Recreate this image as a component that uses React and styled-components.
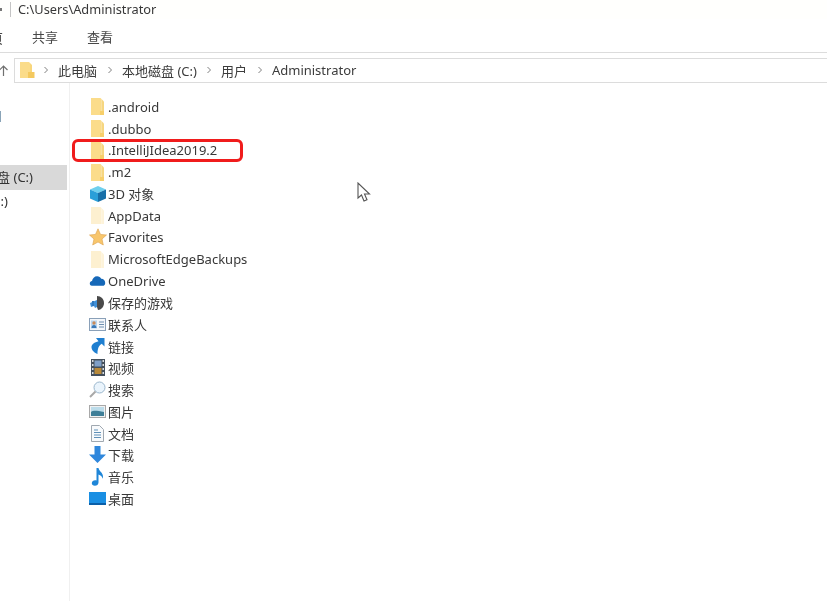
import React from 'react';
import styled, { createGlobalStyle } from 'styled-components';

const GlobalStyle = createGlobalStyle`
  html, body {
    margin: 0;
    padding: 0;
    background: #fff;
  }
`;

const FONT = `'Noto Sans', 'Noto Sans CJK SC', sans-serif`;

const Window = styled.div`
  width: 827px;
  height: 601px;
  overflow: hidden;
  position: relative;
  background: #fff;
  color: #333;
  font-family: ${FONT};
  font-size: 13px;
  filter: blur(0.5px);
`;

const TitleBar = styled.div`
  height: 19px;
  box-sizing: border-box;
  padding-bottom: 1px;
  display: flex;
  align-items: center;
  background: #fffffd;
`;

const TitleCaret = styled.span`
  width: 2px;
  height: 3px;
  background: #777;
  flex: none;
`;

const TitleSep = styled.span`
  width: 1px;
  height: 15px;
  background: #c4c4c4;
  margin-left: 8px;
  margin-right: 7px;
`;

const TitleText = styled.span`
  font-size: 12.8px;
  color: #383838;
`;

const Ribbon = styled.div`
  height: 34px;
  box-sizing: border-box;
  display: flex;
  align-items: center;
  padding: 2px 0 0 32px;
  gap: 29px;
  border-bottom: 1px solid #dcdcdc;
`;

const Tab = styled.span`
  font-size: 13px;
  color: #484848;
`;

const ClippedTab = styled(Tab)`
  position: absolute;
  left: -23px;
  top: 28px;
`;

const AddressRow = styled.div`
  height: 30px;
  box-sizing: border-box;
  display: flex;
  padding-top: 5px;
  align-items: stretch;
`;

const UpArrow = styled.div`
  width: 15px;
  margin-left: -1px;
  display: flex;
  align-items: center;
`;

const AddressBar = styled.div`
  flex: 1;
  display: flex;
  align-items: center;
  box-sizing: border-box;
  border: 1px solid #dcdcdc;
  border-right: none;
  padding: 0 0 1px 5px;
  font-size: 13px;
  color: #3c3c3c;
`;

const Crumb = styled.span`
  margin-left: 9px;
  white-space: nowrap;
`;

const Chevron = styled.svg`
  width: 6px;
  height: 8px;
  margin-left: ${p => p.$gap}px;
  flex: none;
`;

const Body = styled.div`
  flex: 1;
  display: flex;
`;

const Sidebar = styled.div`
  width: 70px;
  height: 518px;
  box-sizing: border-box;
  border-right: 1px solid #f0f0f0;
  padding-top: 82px;
  padding-right: 2px;
  display: flex;
  flex-direction: column;
  position: relative;
`;

const PinMark = styled.span`
  position: absolute;
  left: 0;
  top: 28px;
  width: 1px;
  height: 11px;
  background: #8aa4b8;
`;

const DriveRow = styled.div`
  height: 25px;
  box-sizing: border-box;
  display: flex;
  align-items: center;
  justify-content: flex-end;
  overflow: hidden;
  white-space: nowrap;
  padding-bottom: 3px;
  padding-right: ${p => p.$pad}px;
  font-size: 13px;
  background: ${p => (p.$selected ? '#d9d9d9' : 'transparent')};
`;

const FileList = styled.div`
  flex: 1;
  padding: 13px 0 0 18px;
  display: flex;
  flex-direction: column;
  position: relative;
`;

const Row = styled.div`
  height: 21.75px;
  display: flex;
  align-items: center;
  flex: none;
`;

const IconBox = styled.div`
  width: 19px;
  height: 20px;
  display: flex;
  align-items: center;
  justify-content: center;
  flex: none;
`;

const Name = styled.span`
  margin-left: 1px;
  white-space: nowrap;
  font-size: 13px;
  color: #383838;
`;

const RedBox = styled.div`
  position: absolute;
  left: 2px;
  top: 56px;
  width: 171px;
  height: 23px;
  box-sizing: border-box;
  border: 3px solid #f01c1c;
  border-radius: 6px;
`;

const Cursor = styled.svg`
  position: absolute;
  left: 356px;
  top: 182px;
  width: 16px;
  height: 22px;
`;

const Folder = ({ pale }) => (
  <svg width="15" height="19" viewBox="0 0 15 19">
    <path d="M1 1h9.500l1 1v16H1z" fill={pale ? '#fdf0d0' : '#fbdc8a'} />
    <path d="M11.500 2l2.500 2.500V18h-2.500z" fill={pale ? '#fdf3da' : '#f6d680'} />
    {!pale && <path d="M10 14h4v4h-4z" fill="#f7cf6a" />}
  </svg>
);

const Cube = () => (
  <svg width="18" height="18" viewBox="0 0 18 18">
    <path d="M9 1l8 3.500-8 3.500-8-3.500z" fill="#6fd0ee" />
    <path d="M1 4.500l8 3.500v9l-8-3.500z" fill="#2a9fd8" />
    <path d="M9 8l8-3.500v9l-8 3.500z" fill="#176fa8" />
  </svg>
);

const Star = () => (
  <svg width="18" height="18" viewBox="0 0 18 18">
    <path d="M9 .8l2.500 5.600 6 .6-4.500 4 1.300 6L9 14l-5.300 3 1.300-6-4.500-4 6-.6z" fill="#f8c66c" stroke="#dba04a" strokeWidth=".6" />
  </svg>
);

const Cloud = () => (
  <svg width="17" height="12" viewBox="0 0 18 14">
    <path d="M2.500 12.500C.6 12.500 0 11 0 9.800c0-1.600 1.200-2.700 2.600-2.800C3 4 5.500 1.500 8.500 1.500c2.300 0 4 1.200 4.800 3 2.500-.2 4.700 2 4.700 4.700 0 2-1.200 3.300-3 3.300z" fill="#1668b8" />
  </svg>
);

const Games = () => (
  <svg width="18" height="18" viewBox="0 0 18 18">
    <path d="M1 9l7-3v7l-2 1-1-2-3 1z" fill="#3f8fd6" />
    <path d="M8 2c4 0 7 3 7 7s-3 7-6 7l-1-3V2z" fill="#4a4a4a" />
    <path d="M3 7h2v5H3z" fill="#2f78bf" />
  </svg>
);

const Contact = () => (
  <svg width="17" height="13" viewBox="0 0 17 13">
    <rect x=".5" y=".5" width="16" height="12" fill="#f4f7fb" stroke="#8aa0b8" />
    <rect x="2" y="2.500" width="6" height="8" fill="#b8d6f0" />
    <circle cx="5" cy="5" r="1.700" fill="#c88a5a" />
    <path d="M2.500 10c0-2 1.200-3 2.500-3s2.500 1 2.500 3z" fill="#3a78b8" />
    <path d="M10 4h5M10 6.500h5M10 9h5" stroke="#6e8fb0" />
  </svg>
);

const LinkArrow = () => (
  <svg width="15" height="18" viewBox="0 0 15 18">
    <path d="M6 1h8.500v8.500l-2.800-2.800C9 8.500 7.500 11 7.500 17 3 15 1.500 12.500 1.500 10c0-2.500 3-5 7-5.800z" fill="#1f7fd0" />
  </svg>
);

const Film = () => (
  <svg width="14" height="17" viewBox="0 0 14 17">
    <rect width="14" height="17" fill="#45505c" />
    <path d="M1 1h1.500v2H1zM1 5h1.500v2H1zM1 9h1.500v2H1zM1 13h1.500v2H1zM11.500 1H13v2h-1.500zM11.500 5H13v2h-1.500zM11.500 9H13v2h-1.500zM11.500 13H13v2h-1.500z" fill="#d8dce0" />
    <rect x="3.500" y="1.500" width="7" height="6" fill="#7f9fc8" />
    <rect x="3.500" y="9" width="7" height="6" fill="#b8893a" />
  </svg>
);

const Search = () => (
  <svg width="17" height="17" viewBox="0 0 17 17">
    <circle cx="10.500" cy="6.500" r="5.500" fill="#eaf4fc" stroke="#9ab6cc" />
    <path d="M6.500 10.500L1 16" stroke="#a8a8a8" strokeWidth="2" />
  </svg>
);

const Picture = () => (
  <svg width="17" height="13" viewBox="0 0 17 13">
    <rect x=".5" y=".5" width="16" height="12" fill="#f2f2f2" stroke="#a8a8a8" />
    <rect x="2" y="2" width="13" height="5" fill="#bcdcea" />
    <path d="M2 7c3-2 6-1 13 0v4H2z" fill="#3f7f98" />
  </svg>
);

const Doc = () => (
  <svg width="13" height="17" viewBox="0 0 13 17">
    <path d="M.5.500h8l4 4v12H.5z" fill="#f8fafc" stroke="#a0a8b0" />
    <path d="M3 5h4M3 7.500h7M3 10h7M3 12.500h7" stroke="#5f90b8" />
  </svg>
);

const Download = () => (
  <svg width="17" height="17" viewBox="0 0 17 17">
    <path d="M5.500 0h6v8.500H17L8.500 17 0 8.500h5.500z" fill="#2f87dc" />
  </svg>
);

const Music = () => (
  <svg width="13" height="18" viewBox="0 0 13 18">
    <path d="M5.500 0h2c.3 3 4.500 4.500 4.500 8.500 0 1-.2 1.600-.6 2.300 0-2.300-1.800-3.600-3.900-4.300v8c0 2-1.700 3.300-3.600 3.300C2 17.800.8 16.800.8 15.300c0-1.700 1.700-3 3.300-3 .5 0 1 .1 1.400.3z" fill="#1f86d8" />
  </svg>
);

const Desktop = () => (
  <svg width="17" height="13" viewBox="0 0 17 13">
    <rect width="17" height="13" fill="#1a8fe3" />
    <rect y="11" width="17" height="2" fill="#0b5fa8" />
  </svg>
);

const items = [
  { name: '.android', icon: <Folder /> },
  { name: '.dubbo', icon: <Folder /> },
  { name: '.IntelliJIdea2019.2', icon: <Folder /> },
  { name: '.m2', icon: <Folder /> },
  { name: '3D 对象', icon: <Cube /> },
  { name: 'AppData', icon: <Folder pale /> },
  { name: 'Favorites', icon: <Star /> },
  { name: 'MicrosoftEdgeBackups', icon: <Folder pale /> },
  { name: 'OneDrive', icon: <Cloud /> },
  { name: '保存的游戏', icon: <Games /> },
  { name: '联系人', icon: <Contact /> },
  { name: '链接', icon: <LinkArrow /> },
  { name: '视频', icon: <Film /> },
  { name: '搜索', icon: <Search /> },
  { name: '图片', icon: <Picture /> },
  { name: '文档', icon: <Doc /> },
  { name: '下载', icon: <Download /> },
  { name: '音乐', icon: <Music /> },
  { name: '桌面', icon: <Desktop /> },
];

const crumbs = [
  { label: '此电脑', gap: 8 },
  { label: '本地磁盘 (C:)', gap: 10 },
  { label: '用户', gap: 9 },
  { label: 'Administrator', gap: 10 },
];

const Explorer = () => (
  <Window>
    <TitleBar>
      <TitleCaret />
      <TitleSep />
      <TitleText>C:\Users\Administrator</TitleText>
    </TitleBar>
    <Ribbon>
      <Tab>共享</Tab>
      <Tab>查看</Tab>
    </Ribbon>
    <ClippedTab>主页</ClippedTab>
    <AddressRow>
      <UpArrow>
        <svg width="9" height="11" viewBox="0 0 9 11">
          <path d="M4.500 1v10M.5 5l4-4 4 4" fill="none" stroke="#707070" strokeWidth="1.200" />
        </svg>
      </UpArrow>
      <AddressBar>
        <svg width="15" height="18" viewBox="0 0 15 18">
          <path d="M0 1h9l1 1v15H0z" fill="#fbdc8a" />
          <path d="M8 11h6.500v6H8z" fill="#f4c95f" />
          <path d="M10 2l2 2v7h-2z" fill="#f8d67c" />
        </svg>
        {crumbs.map(c => (
          <React.Fragment key={c.label}>
            <Chevron $gap={c.gap} viewBox="0 0 6 8">
              <path d="M1.500 1l3 3-3 3" fill="none" stroke="#808080" />
            </Chevron>
            <Crumb>{c.label}</Crumb>
          </React.Fragment>
        ))}
      </AddressBar>
    </AddressRow>
    <Body>
      <Sidebar>
        <PinMark />
        <DriveRow $selected $pad={34}>
          <span>盘 (C:)</span>
        </DriveRow>
        <DriveRow $pad={59}>
          <span>:)</span>
        </DriveRow>
      </Sidebar>
      <FileList>
        <RedBox />
        {items.map(item => (
          <Row key={item.name}>
            <IconBox>{item.icon}</IconBox>
            <Name>{item.name}</Name>
          </Row>
        ))}
      </FileList>
    </Body>
    <Cursor viewBox="0 0 16 22">
      <path d="M2 1v15l3.500-3 2.500 6 3-1.300-2.500-5.700h5z" fill="#fff" stroke="#555" strokeWidth="1.100" />
    </Cursor>
  </Window>
);

const App = () => (
  <>
    <GlobalStyle />
    <Explorer />
  </>
);

export default App;
